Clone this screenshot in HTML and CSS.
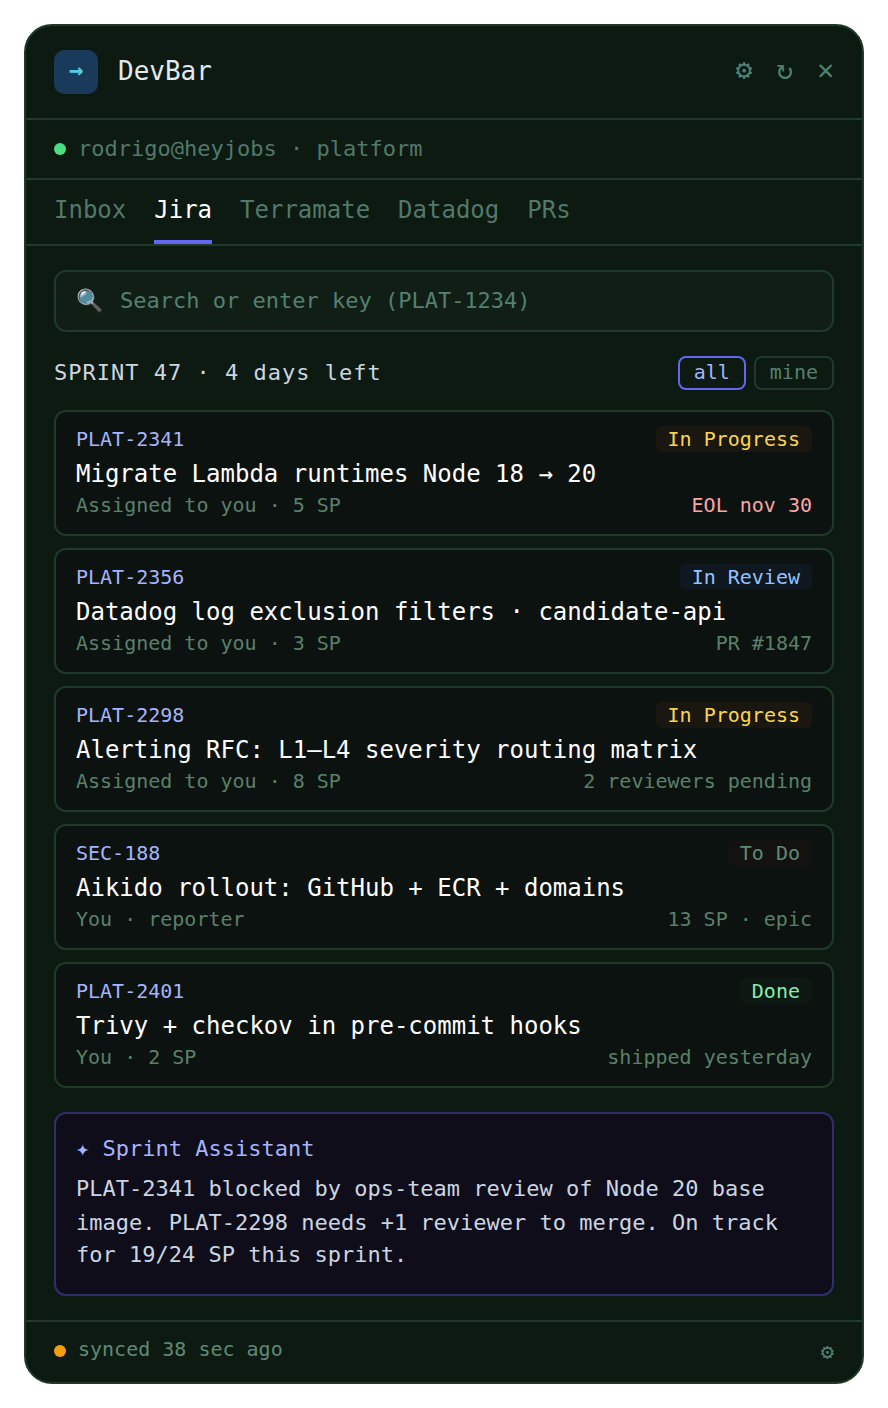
FILE: index.html
```html
<!DOCTYPE html>
<html lang="en">
<head>
<meta charset="utf-8">
<title>DevBar</title>
<link rel="stylesheet" href="styles.css">
</head>
<body>
<div class="panel">
  <header class="header">
    <div class="logo">→</div>
    <div class="brand">DevBar</div>
    <div class="actions"><span>⚙</span><span>↻</span><span>✕</span></div>
  </header>
  <div class="account"><span class="dot dot-green"></span><span class="account-text">rodrigo@heyjobs · platform</span></div>
  <nav class="tabs">
    <div class="tab">Inbox</div>
    <div class="tab tab-active">Jira</div>
    <div class="tab">Terramate</div>
    <div class="tab">Datadog</div>
    <div class="tab">PRs</div>
  </nav>
  <main class="content">
    <div class="search"><span class="search-icon">🔍</span><span>Search or enter key (PLAT-1234)</span></div>
    <div class="sprint">
      <div class="sprint-name">SPRINT 47 · 4 days left</div>
      <div class="filters"><span class="filter filter-on">all</span><span class="filter">mine</span></div>
    </div>
    <div class="issues">
      <article class="issue">
        <div class="row"><span class="key">PLAT-2341</span><span class="badge badge-progress">In Progress</span></div>
        <div class="title">Migrate Lambda runtimes Node 18 → 20</div>
        <div class="row meta"><span>Assigned to you · 5 SP</span><span class="warn">EOL nov 30</span></div>
      </article>
      <article class="issue">
        <div class="row"><span class="key">PLAT-2356</span><span class="badge badge-review">In Review</span></div>
        <div class="title">Datadog log exclusion filters · candidate-api</div>
        <div class="row meta"><span>Assigned to you · 3 SP</span><span>PR #1847</span></div>
      </article>
      <article class="issue">
        <div class="row"><span class="key">PLAT-2298</span><span class="badge badge-progress">In Progress</span></div>
        <div class="title">Alerting RFC: L1–L4 severity routing matrix</div>
        <div class="row meta"><span>Assigned to you · 8 SP</span><span>2 reviewers pending</span></div>
      </article>
      <article class="issue">
        <div class="row"><span class="key">SEC-188</span><span class="badge badge-todo">To Do</span></div>
        <div class="title">Aikido rollout: GitHub + ECR + domains</div>
        <div class="row meta"><span>You · reporter</span><span>13 SP · epic</span></div>
      </article>
      <article class="issue">
        <div class="row"><span class="key">PLAT-2401</span><span class="badge badge-done">Done</span></div>
        <div class="title">Trivy + checkov in pre-commit hooks</div>
        <div class="row meta"><span>You · 2 SP</span><span>shipped yesterday</span></div>
      </article>
    </div>
    <section class="assistant">
      <div class="assistant-title">✦ Sprint Assistant</div>
      <div class="assistant-text">
        <div class="line-a">PLAT-2341 blocked by ops-team review of Node 20 base</div>
        <div class="line-b">image. PLAT-2298 needs +1 reviewer to merge. On track</div>
        <div class="line-c">for 19/24 SP this sprint.</div>
      </div>
    </section>
  </main>
  <footer class="footer">
    <span class="dot dot-orange"></span><span class="synced">synced 38 sec ago</span>
    <span class="footer-gear">⚙</span>
  </footer>
</div>
</body>
</html>
```
FILE: styles.css
```css
* { box-sizing: border-box; }
html, body { margin: 0; background: #fff; }
body {
  padding: 24px;
  font-family: "DejaVu Sans Mono", monospace;
  color: #fff;
}
.panel {
  width: 840px;
  height: 1360px;
  background: #0c1a11;
  border: 2px solid #1f3a2a;
  border-radius: 28px;
  display: flex;
  flex-direction: column;
}
.header {
  height: 94px;
  padding: 0 28px;
  border-bottom: 2px solid #1f3a2a;
  display: flex;
  align-items: center;
  gap: 20px;
}
.logo {
  width: 44px;
  height: 44px;
  border-radius: 10px;
  background: #1a3a5c;
  color: #4dd0e1;
  font-size: 24px;
  font-weight: 700;
  padding-bottom: 4px;
  display: flex;
  align-items: center;
  justify-content: center;
}
.brand { font-size: 26px; padding-bottom: 2px; color: #e2e8f0; }
.actions {
  margin-left: auto;
  display: flex;
  gap: 24px;
  padding-bottom: 6px;
  font-size: 28px;
  color: #4f8070;
}
.account {
  height: 60px;
  padding: 0 28px;
  border-bottom: 2px solid #1f3a2a;
  display: flex;
  align-items: center;
  gap: 12px;
  font-size: 22px;
  color: #52786a;
}
.account-text { padding-bottom: 2px; }
.dot { width: 12px; height: 12px; border-radius: 50%; flex: none; }
.dot-green { background: #4ade80; }
.dot-orange { background: #f59e0b; }
.tabs {
  height: 66px;
  padding: 0 28px;
  border-bottom: 2px solid #1f3a2a;
  display: flex;
  gap: 28px;
  font-size: 24px;
}
.tab {
  color: #52786a;
  height: 64px;
  padding-top: 16px;
  border-bottom: 4px solid transparent;
}
.tab-active { color: #fff; border-bottom-color: #6366f1; }
.content { flex: 1; padding: 24px 28px; }
.search {
  height: 62px;
  padding: 0 20px 2px;
  background: #101e16;
  border: 2px solid #1f3a2a;
  border-radius: 12px;
  display: flex;
  align-items: center;
  gap: 16px;
  font-size: 22px;
  color: #558070;
}
.search-icon { font-size: 22px; width: 28px; }
.sprint {
  margin-top: 24px;
  height: 34px;
  display: flex;
  align-items: center;
  justify-content: space-between;
}
.sprint-name { font-size: 22px; letter-spacing: 1px; padding-bottom: 2px; color: #cbd5e1; }
.filters { display: flex; gap: 8px; }
.filter {
  height: 34px;
  padding: 0 14px 2px;
  border: 2px solid #1f3a2a;
  border-radius: 8px;
  font-size: 20px;
  color: #558070;
  display: flex;
  align-items: center;
}
.filter-on { border-color: #6366f1; color: #a5b4fc; }
.issues { margin-top: 20px; display: flex; flex-direction: column; gap: 12px; }
.issue {
  height: 126px;
  padding: 14px 20px;
  background: #0c120f;
  border: 2px solid #1f3a2a;
  border-radius: 12px;
}
.row { display: flex; align-items: center; justify-content: space-between; }
.key { font-size: 20px; color: #a5b4fc; }
.badge { font-size: 20px; padding: 0 12px; height: 26px; line-height: 26px; border-radius: 6px; }
.badge-progress { background: #1a1610; color: #fcd34d; }
.badge-review { background: #0f1720; color: #93c5fd; }
.badge-todo { background: #141210; color: #5f8a74; }
.badge-done { background: #0e1813; color: #86efac; }
.title { margin-top: 6px; font-size: 24px; line-height: 32px; color: #fff; }
.meta { margin-top: 0; font-size: 20px; line-height: 30px; color: #5a8069; }
.warn { color: #fca5a5; }
.assistant {
  margin-top: 24px;
  height: 184px;
  padding: 18px 20px;
  background: #0f0d1a;
  border: 2px solid #312e6b;
  border-radius: 12px;
}
.assistant-title { font-size: 22px; line-height: 33px; color: #a5b4fc; }
.assistant-text { margin-top: 7px; font-size: 22px; color: #cbd5e1; }
.line-a { line-height: 33px; }
.line-b { line-height: 35px; }
.line-c { line-height: 29px; }
.footer {
  height: 62px;
  padding: 0 28px 2px;
  border-top: 2px solid #1f3a2a;
  display: flex;
  align-items: center;
  gap: 12px;
}
.synced { font-size: 20px; padding-bottom: 4px; color: #5f8a74; }
.footer-gear { margin-left: auto; font-size: 22px; color: #4f8070; }
```
